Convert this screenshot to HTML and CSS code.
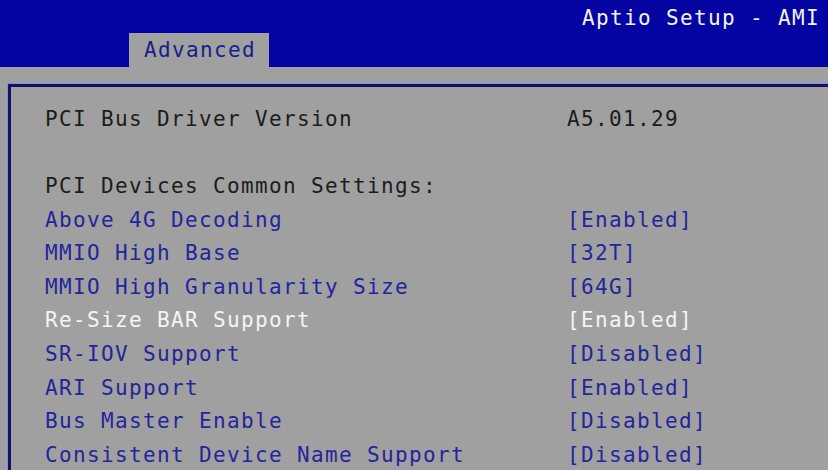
FILE: index.html
```html
<!DOCTYPE html>
<html>
<head>
<meta charset="utf-8">
<link rel="stylesheet" href="styles.css">
</head>
<body>
<div class="screen">
  <header class="header">
    <div class="title-row"><span class="title">Aptio Setup - AMI</span></div>
    <div class="tab-row"><div class="tab">Advanced</div></div>
  </header>
  <main class="frame">
    <div class="rows">
      <div class="label dark">PCI Bus Driver Version</div><div class="value dark">A5.01.29</div>
      <div class="label blank">&nbsp;</div><div class="value blank">&nbsp;</div>
      <div class="label dark">PCI Devices Common Settings:</div><div class="value"></div>
      <div class="label">Above 4G Decoding</div><div class="value">[Enabled]</div>
      <div class="label">MMIO High Base</div><div class="value">[32T]</div>
      <div class="label">MMIO High Granularity Size</div><div class="value">[64G]</div>
      <div class="label sel">Re-Size BAR Support</div><div class="value sel">[Enabled]</div>
      <div class="label">SR-IOV Support</div><div class="value">[Disabled]</div>
      <div class="label">ARI Support</div><div class="value">[Enabled]</div>
      <div class="label">Bus Master Enable</div><div class="value">[Disabled]</div>
      <div class="label">Consistent Device Name Support</div><div class="value">[Disabled]</div>
    </div>
  </main>
</div>
</body>
</html>
```
FILE: styles.css
```css
html, body {
  margin: 0;
  padding: 0;
  width: 828px;
  height: 470px;
  overflow: hidden;
  background: #a0a0a0;
}
.screen {
  font-family: "DejaVu Sans Mono", "Liberation Mono", monospace;
  font-size: 21px;
  letter-spacing: 1.36px;
  width: 828px;
  height: 470px;
  overflow: hidden;
}
.header {
  background: #0404a2;
  height: 67px;
  display: flex;
  flex-direction: column;
}
.title-row {
  height: 33px;
  display: flex;
  justify-content: flex-end;
  align-items: center;
  padding-right: 8px;
  padding-top: 2px;
  box-sizing: border-box;
}
.title {
  color: #f2f2f2;
  line-height: 24px;
}
.tab-row {
  height: 34px;
  display: flex;
}
.tab {
  margin-left: 129px;
  width: 140px;
  height: 34px;
  background: #a0a0a0;
  color: #1c1c8c;
  display: flex;
  align-items: center;
  justify-content: center;
  padding-left: 2px;
  box-sizing: border-box;
}
.frame {
  margin-top: 17px;
  margin-left: 8px;
  width: 900px;
  height: 500px;
  border-top: 3px solid #12125e;
  border-left: 3px solid #12125e;
  box-shadow: -1px -1px 0 #8a8ae6;
  padding: 15px 0 0 34px;
  box-sizing: border-box;
}
.rows {
  display: grid;
  grid-template-columns: 522px auto;
  grid-auto-rows: 33.6px;
  align-items: center;
}
.label, .value {
  color: #24249c;
  white-space: pre;
  line-height: 24px;
}
.dark {
  color: #1c1c1c;
}
.sel {
  color: #f4f4f4;
}
```
